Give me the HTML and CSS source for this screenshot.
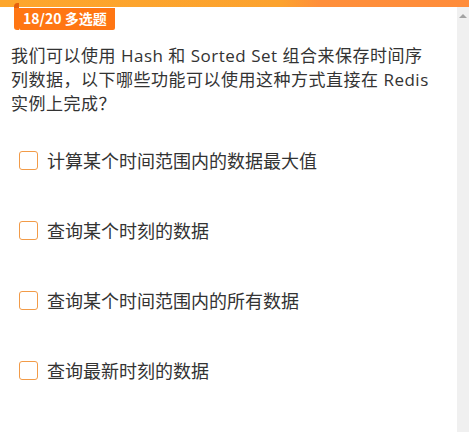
FILE: index.html
```html
<!DOCTYPE html>
<html lang="zh">
<head>
<meta charset="utf-8">
<link rel="stylesheet" href="styles.css">
</head>
<body>
<div class="topbar"></div>
<div class="frame">
  <main class="content">
    <div class="badge">18/20 多选题</div>
    <p class="question">我们可以使用 Hash 和 Sorted Set 组合来保存时间序列数据，以下哪些功能可以使用这种方式直接在 Redis 实例上完成？</p>
    <ul class="options">
      <li class="option"><span class="box"></span><span class="label">计算某个时间范围内的数据最大值</span></li>
      <li class="option"><span class="box"></span><span class="label">查询某个时刻的数据</span></li>
      <li class="option"><span class="box"></span><span class="label">查询某个时间范围内的所有数据</span></li>
      <li class="option"><span class="box"></span><span class="label">查询最新时刻的数据</span></li>
    </ul>
  </main>
  <div class="scrollbar"><span class="arrow"></span></div>
</div>
</body>
</html>
```
FILE: styles.css
```css
html, body {
  margin: 0;
  padding: 0;
  height: 100%;
  overflow: hidden;
  background: #fff;
  font-family: "Open Sans", "Noto Sans CJK SC", sans-serif;
}
.topbar {
  height: 7px;
  background: linear-gradient(90deg, #fda62c 0%, #fca22e 60%, #ff8f3a 68%, #ff8c3a 100%);
}
.frame {
  display: flex;
  height: calc(100% - 7px);
}
.content {
  flex: 1;
  padding: 0 0 0 11px;
}
.scrollbar {
  width: 12px;
  background: #f0f0f0;
  display: flex;
  justify-content: center;
  padding-top: 7px;
  box-sizing: border-box;
}
.arrow {
  width: 0;
  height: 0;
  border-left: 4px solid transparent;
  border-right: 4px solid transparent;
  border-bottom: 4px solid #a3a3a3;
}
.badge {
  position: relative;
  display: inline-block;
  margin-left: 8px;
  height: 22px;
  line-height: 21px;
  padding: 0 8px 0 4px;
  background: #ff7613;
  color: #fff;
  font-family: "Noto Sans CJK SC", sans-serif;
  font-weight: 700;
  font-size: 14px;
  border-radius: 0 0 2px 2px;
}
.badge::before {
  content: "";
  position: absolute;
  left: -5px;
  top: -5px;
  width: 5px;
  height: 27px;
  background: #ff7613;
  border-radius: 4px 0 0 3px;
}
.badge::after {
  content: "";
  position: absolute;
  left: -5px;
  top: -5px;
  width: 5px;
  height: 5px;
  background: #e55f0c;
  border-radius: 4px 0 0 0;
}
.question {
  width: 422px;
  margin: 14px 0 0;
  font-size: 17px;
  line-height: 24px;
  letter-spacing: 0.5px;
  color: #333;
}
.options {
  list-style: none;
  margin: 0;
  padding: 0 0 0 8px;
}
.option {
  display: flex;
  align-items: center;
  gap: 9px;
  height: 24px;
  margin-top: 46px;
  font-size: 18px;
  color: #333;
}
.option:first-child {
  margin-top: 32px;
}
.box {
  width: 17px;
  height: 17px;
  border: 1px solid #f29b48;
  border-radius: 3px;
  flex: none;
}
```
